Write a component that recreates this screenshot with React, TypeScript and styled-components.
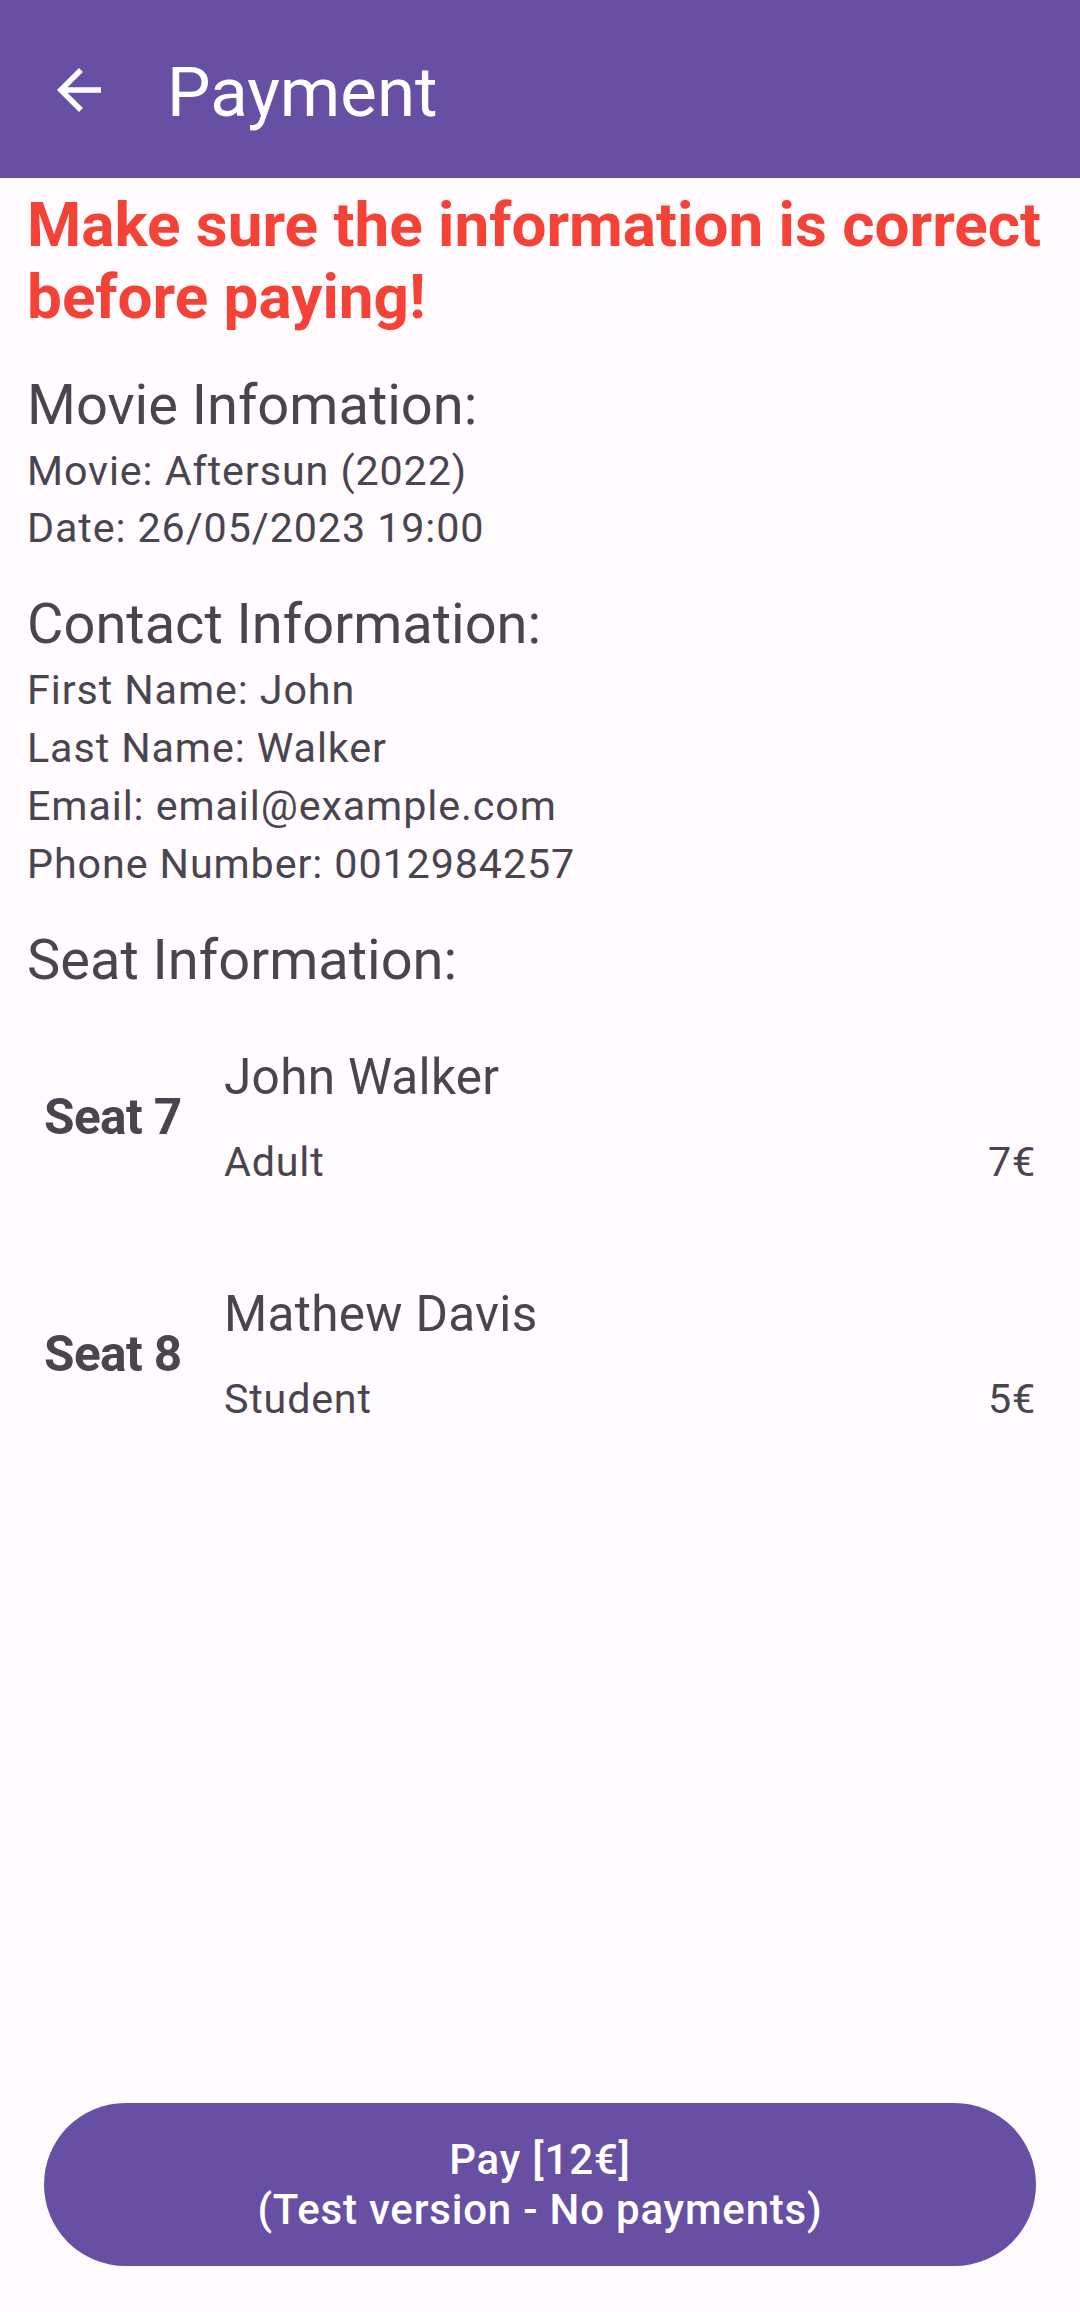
import React from "react";
import styled, { createGlobalStyle } from "styled-components";

const Global = createGlobalStyle`
  html, body { margin: 0; padding: 0; background: #FFFBFE; }
  body { font-family: Roboto, "Noto Sans", "Liberation Sans", sans-serif; }
  * { box-sizing: border-box; }
`;

const Page = styled.div`
  min-height: 2312px;
  display: flex;
  flex-direction: column;
  background: #fffbfe;
  color: #49454f;
`;

const AppBar = styled.header`
  height: 178px;
  background: #6750a4;
  display: flex;
  align-items: center;
  padding-left: 46px;
  flex-shrink: 0;
`;

const BackButton = styled.button`
  width: 66px;
  height: 66px;
  margin-top: 2px;
  padding: 0;
  border: none;
  background: transparent;
  display: flex;
  align-items: center;
  justify-content: center;
  cursor: pointer;
`;

const Title = styled.h1`
  margin: 7px 0 0 55px;
  font-size: 69px;
  line-height: 81px;
  font-weight: 400;
  color: #ffffff;
`;

const Content = styled.main`
  padding: 0 27px;
  display: flex;
  flex-direction: column;
`;

const Warning = styled.p`
  margin: 11px 0 0;
  font-size: 62px;
  line-height: 72px;
  font-weight: 700;
  color: #f44336;
  white-space: nowrap;
`;

const Heading = styled.h2<{ $gap: number }>`
  margin: ${(p) => p.$gap}px 0 0;
  font-size: 56px;
  line-height: 64px;
  font-weight: 400;
  color: #49454f;
`;

const InfoList = styled.div<{ $line: number; $gap: number }>`
  margin-top: ${(p) => p.$gap}px;
  font-size: 41.25px;
  line-height: ${(p) => p.$line}px;
  letter-spacing: 0.9px;
  color: #49454f;
`;

const InfoLine = styled.div``;

const SeatList = styled.div`
  margin-top: 6px;
  display: flex;
  flex-direction: column;
`;

const SeatRow = styled.div`
  display: flex;
  align-items: center;
  padding: 49px 17px;
`;

const SeatLabel = styled.div`
  width: 180px;
  font-size: 49.5px;
  line-height: 60px;
  font-weight: 700;
  letter-spacing: -0.6px;
  color: #49454f;
  white-space: nowrap;
`;

const SeatDetails = styled.div`
  flex: 1;
  display: flex;
  flex-direction: column;
`;

const Holder = styled.div`
  font-size: 49.5px;
  line-height: 60px;
  letter-spacing: 0.3px;
  color: #49454f;
`;

const TicketLine = styled.div`
  margin-top: 31px;
  display: flex;
  justify-content: space-between;
  font-size: 41.25px;
  line-height: 48px;
  letter-spacing: 0.8px;
  color: #49454f;
`;

const PayButton = styled.button`
  margin: auto 44px 46px;
  height: 163px;
  border: none;
  border-radius: 82px;
  background: #6750a4;
  color: #ffffff;
  font-family: Roboto, "Noto Sans", sans-serif;
  font-size: 42px;
  line-height: 50px;
  font-weight: 500;
  letter-spacing: 0.8px;
  display: flex;
  flex-direction: column;
  align-items: center;
  justify-content: center;
  flex-shrink: 0;
  cursor: pointer;
`;

const seats = [
  { seat: 7, name: "John Walker", type: "Adult", price: "7€" },
  { seat: 8, name: "Mathew Davis", type: "Student", price: "5€" },
];

export default function App() {
  return (
    <>
      <Global />
      <Page>
        <AppBar>
          <BackButton aria-label="Back">
            <svg width="66" height="66" viewBox="0 0 24 24">
              <path
                fill="#ffffff"
                d="M20 11H7.83l5.59-5.59L12 4l-8 8 8 8 1.41-1.41L7.83 13H20v-2z"
              />
            </svg>
          </BackButton>
          <Title>Payment</Title>
        </AppBar>
        <Content>
          <Warning>
            Make sure the information is correct
            <br />
            before paying!
          </Warning>
          <Heading $gap={40}>Movie Infomation:</Heading>
          <InfoList $line={57} $gap={6}>
            <InfoLine>Movie: Aftersun (2022)</InfoLine>
            <InfoLine>Date: 26/05/2023 19:00</InfoLine>
          </InfoList>
          <Heading $gap={35}>Contact Information:</Heading>
          <InfoList $line={58} $gap={5}>
            <InfoLine>First Name: John</InfoLine>
            <InfoLine>Last Name: Walker</InfoLine>
            <InfoLine>Email: email@example.com</InfoLine>
            <InfoLine>Phone Number: 0012984257</InfoLine>
          </InfoList>
          <Heading $gap={35}>Seat Information:</Heading>
          <SeatList>
            {seats.map((s) => (
              <SeatRow key={s.seat}>
                <SeatLabel>Seat {s.seat}</SeatLabel>
                <SeatDetails>
                  <Holder>{s.name}</Holder>
                  <TicketLine>
                    <span>{s.type}</span>
                    <span>{s.price}</span>
                  </TicketLine>
                </SeatDetails>
              </SeatRow>
            ))}
          </SeatList>
        </Content>
        <PayButton>
          <span>Pay [12€]</span>
          <span>(Test version - No payments)</span>
        </PayButton>
      </Page>
    </>
  );
}
